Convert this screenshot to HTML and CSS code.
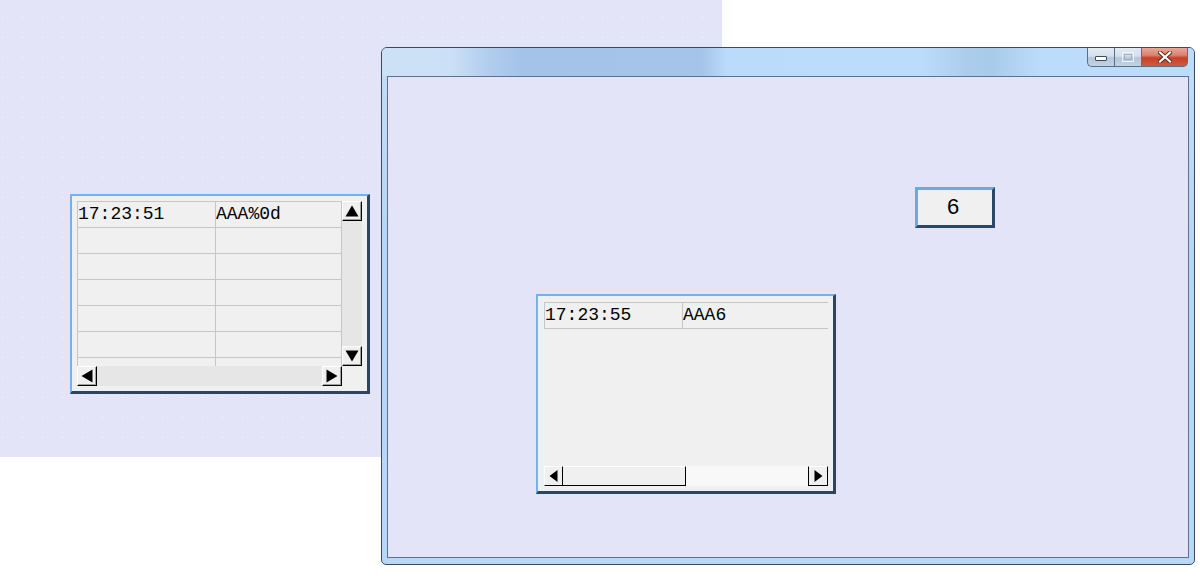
FILE: index.html
```html
<!DOCTYPE html>
<html>
<head>
<meta charset="utf-8">
<link rel="stylesheet" href="styles.css">
</head>
<body>
<div class="desktop">
  <div class="backdrop"></div>

  <div class="listwin lw-left">
    <div class="lv lv-left">
      <div class="lv-body">
        <div class="row"><div class="cell c1">17:23:51</div><div class="cell c2">AAA%0d</div></div>
        <div class="row"><div class="cell c1"></div><div class="cell c2"></div></div>
        <div class="row"><div class="cell c1"></div><div class="cell c2"></div></div>
        <div class="row"><div class="cell c1"></div><div class="cell c2"></div></div>
        <div class="row"><div class="cell c1"></div><div class="cell c2"></div></div>
        <div class="row"><div class="cell c1"></div><div class="cell c2"></div></div>
        <div class="row"><div class="cell c1"></div><div class="cell c2"></div></div>
      </div>
      <div class="vscroll">
        <div class="sbtn"><svg width="14" height="12" viewBox="0 0 14 12"><polygon points="7,0.5 13.5,11.5 0.5,11.5" fill="#000"/></svg></div>
        <div class="vtrack"></div>
        <div class="sbtn"><svg width="14" height="12" viewBox="0 0 14 12"><polygon points="0.5,0.5 13.5,0.5 7,11.5" fill="#000"/></svg></div>
      </div>
      <div class="hscroll">
        <div class="sbtn sbtn-h"><svg width="12" height="14" viewBox="0 0 12 14"><polygon points="11.5,0.5 11.5,13.5 0.5,7" fill="#000"/></svg></div>
        <div class="htrack"></div>
        <div class="sbtn sbtn-h"><svg width="12" height="14" viewBox="0 0 12 14"><polygon points="0.5,0.5 0.5,13.5 11.5,7" fill="#000"/></svg></div>
      </div>
      <div class="corner"></div>
    </div>
  </div>

  <div class="window">
    <div class="titlebar">
      <div class="caption-btns">
        <div class="cbtn cb-min"><svg width="12" height="6" viewBox="0 0 12 6"><rect x="0.5" y="0.5" width="11" height="4" rx="0.5" fill="#fff" stroke="#3d4a5a"/></svg></div>
        <div class="cbtn cb-max"><svg width="12" height="10" viewBox="0 0 12 10"><rect x="0.5" y="0.5" width="11" height="9" fill="none" stroke="#eef3f9"/><rect x="2.5" y="2.5" width="7" height="5" fill="none" stroke="#9fb1c6"/></svg></div>
        <div class="cbtn cb-close"><svg width="14" height="12" viewBox="0 0 14 12"><path d="M2 1.5 L12 10.5 M12 1.5 L2 10.5" stroke="#5a2019" stroke-width="4" stroke-linecap="square"/><path d="M2 1.5 L12 10.5 M12 1.5 L2 10.5" stroke="#fff" stroke-width="2.2" stroke-linecap="square"/></svg></div>
      </div>
    </div>
    <div class="client">
      <div class="btn6">6</div>

      <div class="listwin lw-right">
        <div class="lv lv-right">
          <div class="lv-body">
            <div class="row row-r"><div class="cell c1">17:23:55</div><div class="cell c2r">AAA6</div></div>
          </div>
          <div class="hscroll hscroll-r">
            <div class="sbtn sbtn-r"><svg width="9" height="12" viewBox="0 0 9 12"><polygon points="8.5,0 8.5,12 0.5,6" fill="#000"/></svg></div>
            <div class="thumb"></div>
            <div class="htrack-r"></div>
            <div class="sbtn sbtn-r sbtn-rr"><svg width="9" height="12" viewBox="0 0 9 12"><polygon points="0.5,0 0.5,12 8.5,6" fill="#000"/></svg></div>
          </div>
        </div>
      </div>
    </div>
  </div>
</div>
</body>
</html>
```

FILE: styles.css
```css
html, body {
  margin: 0;
  padding: 0;
  background: #ffffff;
}

.desktop {
  position: relative;
  width: 1200px;
  height: 586px;
  overflow: hidden;
  font-family: "Liberation Sans", Arial, sans-serif;
}

.backdrop {
  width: 722px;
  height: 457px;
  background-color: #e4e4f8;
  background-image: radial-gradient(circle at 0.5px 0.5px, #fbfbff 0.6px, rgba(255,255,255,0) 1px);
  background-size: 20px 20px;
  background-position: 2px 17px;
}

/* list windows */
.listwin {
  position: absolute;
  box-sizing: border-box;
  width: 300px;
  height: 200px;
  background: #f0f0f0;
  border-top: 2px solid #74b2ef;
  border-left: 2px solid #74b2ef;
  border-right: 3px solid #2e455f;
  border-bottom: 3px solid #2e455f;
}

.lw-left {
  left: 70px;
  top: 194px;
  padding: 5px;
}

.lw-right {
  left: 148px;
  top: 217px;
  padding: 6px 5px 5px 6px;
}

.lv {
  display: grid;
}

.lv-left {
  grid-template-columns: 265px 20px;
  grid-template-rows: 165px 20px;
}

.lv-right {
  grid-template-columns: 284px;
  grid-template-rows: 164px 20px;
}

.lv-body {
  overflow: hidden;
  background: #f0f0f0;
}

.row {
  display: flex;
  box-sizing: border-box;
  height: 26px;
  border-top: 1px solid #c6c6c6;
}

.row-r {
  border-bottom: 1px solid #c6c6c6;
  height: 27px;
}

.cell {
  box-sizing: border-box;
  height: 25px;
  border-left: 1px solid #c6c6c6;
  font-family: "Liberation Mono", "DejaVu Sans Mono", monospace;
  font-size: 18px;
  line-height: 24px;
  color: #000;
  padding-left: 0;
  white-space: nowrap;
}

.c1 { width: 138px; }
.c2 { width: 127px; border-right: 1px solid #c6c6c6; }
.c2r { width: 146px; }

/* scrollbars */
.vscroll {
  display: flex;
  flex-direction: column;
  background: #e6e6e6;
}

.vtrack {
  flex: 1;
  background: #e6e6e6;
}

.hscroll {
  display: flex;
  background: #e6e6e6;
}

.htrack {
  flex: 1;
  background: #e6e6e6;
}

.corner {
  background: #f0f0f0;
}

.sbtn {
  box-sizing: border-box;
  width: 20px;
  height: 20px;
  background: #f0f0f0;
  border-top: 1px solid #ffffff;
  border-left: 1px solid #ffffff;
  border-right: 1px solid #000;
  border-bottom: 1px solid #000;
  box-shadow: inset -1px -1px 0 #a0a0a0;
  display: flex;
  align-items: center;
  justify-content: center;
}

.sbtn svg { display: block; }

.hscroll-r {
  background: #f8f8f8;
}

.sbtn-r {
  width: 19px;
  box-shadow: none;
}

.sbtn-rr {
  width: 20px;
  border-left: 1px solid #000;
}

.thumb {
  box-sizing: border-box;
  width: 123px;
  height: 20px;
  background: #f0f0f0;
  border-top: 1px solid #fff;
  border-right: 1px solid #000;
  border-bottom: 1px solid #000;
}

.htrack-r {
  flex: 1;
  background: #f8f8f8;
}

/* main window */
.window {
  position: absolute;
  left: 381px;
  top: 47px;
  box-sizing: border-box;
  width: 814px;
  height: 518px;
  border: 1px solid #3b4a5c;
  border-radius: 6px 6px 5px 5px;
  background: linear-gradient(to bottom, #c4dcf6 0%, #b7d5f5 40%, #b9d7f6 100%);
  padding: 0 5px 6px 5px;
  display: flex;
  flex-direction: column;
}

.titlebar {
  position: relative;
  height: 28px;
  margin: 0 -5px;
  border-radius: 5px 5px 0 0;
  background: linear-gradient(to right,
    #cde1f6 0px, #cbe0f6 70px, #b6d0ee 100px, #a3c3e9 140px, #a4c4e9 320px,
    #bbdbfb 345px, #bcdcfb 540px, #abcdeb 585px, #a9cbea 610px, #bcdcfb 660px, #bcdcfb 100%);
}

.caption-btns {
  position: absolute;
  right: 6px;
  top: 0;
  display: flex;
}

.cbtn {
  box-sizing: border-box;
  height: 19px;
  display: flex;
  align-items: center;
  justify-content: center;
  border: 1px solid #5c6e83;
  border-top: none;
}

.cbtn svg { display: block; }

.cb-min {
  width: 27px;
  border-right: none;
  border-radius: 0 0 0 5px;
  background: linear-gradient(to bottom, #e3ebf4 0%, #d3dfec 45%, #b5c6da 55%, #c3d3e6 100%);
}

.cb-min svg { margin-top: 4px; }

.cb-max {
  width: 27px;
  border-right: none;
  background: linear-gradient(to bottom, #e3ebf4 0%, #d3dfec 45%, #b5c6da 55%, #c3d3e6 100%);
}

.cb-close {
  width: 47px;
  border-radius: 0 0 5px 0;
  background: linear-gradient(to bottom, #e7a898 0%, #d9836f 40%, #c4412c 55%, #d25a3f 100%);
}

.client {
  position: relative;
  flex: 1;
  background: #e4e4f8;
  border: 1px solid #5f7088;
}

.btn6 {
  position: absolute;
  left: 527px;
  top: 110px;
  box-sizing: border-box;
  width: 80px;
  height: 41px;
  padding-right: 4px;
  background: #f0f0f0;
  border-top: 3px solid #6ea8e3;
  border-left: 3px solid #6ea8e3;
  border-right: 3px solid #2d4866;
  border-bottom: 3px solid #2d4866;
  font-family: "Liberation Sans", Arial, sans-serif;
  font-size: 22px;
  line-height: 34px;
  text-align: center;
  color: #000;
}
```
